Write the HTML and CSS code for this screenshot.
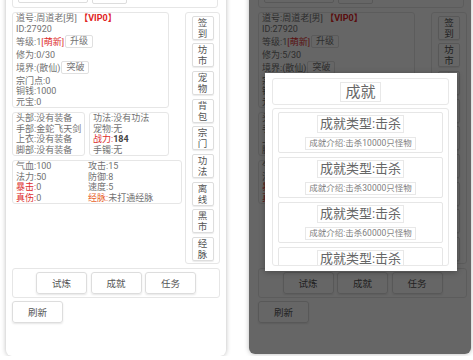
FILE: index.html
```html
<!DOCTYPE html>
<html lang="zh">
<head>
  <meta charset="UTF-8" />
  <title>修仙</title>
  <link rel="stylesheet" href="styles.css">
</head>
<body>

<div class="screens">

  <!-- 左：主界面 -->
  <div class="card">
    <div class="topbar">
      <div class="top-input"></div>
      <div class="top-btn"></div>
    </div>

    <div class="main">
      <div class="left-col">
        <div class="box info">
          <div>道号:周道老[男] <span class="vip">【VIP0】</span></div>
          <div>ID:27920</div>
          <div class="line-btn">等级:1<span class="red">[萌新]</span><span class="mini-btn">升级</span></div>
          <div>修为:0/30</div>
          <div class="line-btn">境界:(散仙)<span class="mini-btn">突破</span></div>
          <div>宗门点:0</div>
          <div>铜钱:1000</div>
          <div>元宝:0</div>
        </div>

        <div class="equip">
          <div class="box equip-a">
            <div>头部:没有装备</div>
            <div>手部:金蛇飞天剑</div>
            <div>上衣:没有装备</div>
            <div>脚部:没有装备</div>
          </div>
          <div class="box equip-b">
            <div>功法:没有功法</div>
            <div>宠物:无</div>
            <div><span class="red">战力:</span><b class="power">184</b></div>
            <div>手镯:无</div>
          </div>
        </div>

        <div class="box stats">
          <div>气血:100</div><div>攻击:15</div>
          <div>法力:50</div><div>防御:8</div>
          <div><span class="red">暴击:</span>0</div><div>速度:5</div>
          <div><span class="red">真伤:</span>0</div><div><span class="orange">经脉:</span>未打通经脉</div>
        </div>
      </div>

      <div class="side">
        <div class="side-btn">签<br>到</div>
        <div class="side-btn">坊<br>市</div>
        <div class="side-btn">宠<br>物</div>
        <div class="side-btn">背<br>包</div>
        <div class="side-btn">宗<br>门</div>
        <div class="side-btn">功<br>法</div>
        <div class="side-btn">离<br>线</div>
        <div class="side-btn">黑<br>市</div>
        <div class="side-btn">经<br>脉</div>
      </div>
    </div>

    <div class="actions">
      <div class="btn">试炼</div>
      <div class="btn">成就</div>
      <div class="btn">任务</div>
    </div>
    <div class="btn refresh">刷新</div>
  </div>

  <!-- 右：成就弹窗 -->
  <div class="card card-right">
    <div class="topbar">
      <div class="top-input"></div>
      <div class="top-btn"></div>
    </div>

    <div class="main">
      <div class="left-col">
        <div class="box info">
          <div>道号:周道老[男] <span class="vip">【VIP0】</span></div>
          <div>ID:27920</div>
          <div class="line-btn">等级:1<span class="red">[萌新]</span><span class="mini-btn">升级</span></div>
          <div>修为:5/30</div>
          <div class="line-btn">境界:(散仙)<span class="mini-btn">突破</span></div>
          <div>宗门点:0</div>
          <div>铜钱:1000</div>
          <div>元宝:0</div>
        </div>

        <div class="equip">
          <div class="box equip-a">
            <div>头部:没有装备</div>
            <div>手部:金蛇飞天剑</div>
            <div>上衣:没有装备</div>
            <div>脚部:没有装备</div>
          </div>
          <div class="box equip-b">
            <div>功法:没有功法</div>
            <div>宠物:无</div>
            <div><span class="red">战力:</span><b class="power">184</b></div>
            <div>手镯:无</div>
          </div>
        </div>

        <div class="box stats">
          <div>气血:100</div><div>攻击:15</div>
          <div>法力:50</div><div>防御:8</div>
          <div><span class="red">暴击:</span>0</div><div>速度:5</div>
          <div><span class="red">真伤:</span>0</div><div><span class="orange">经脉:</span>未打通经脉</div>
        </div>
      </div>

      <div class="side">
        <div class="side-btn">签<br>到</div>
        <div class="side-btn">坊<br>市</div>
        <div class="side-btn">宠<br>物</div>
        <div class="side-btn">背<br>包</div>
        <div class="side-btn">宗<br>门</div>
        <div class="side-btn">功<br>法</div>
        <div class="side-btn">离<br>线</div>
        <div class="side-btn">黑<br>市</div>
        <div class="side-btn">经<br>脉</div>
      </div>
    </div>

    <div class="actions">
      <div class="btn">试炼</div>
      <div class="btn">成就</div>
      <div class="btn">任务</div>
    </div>
    <div class="btn refresh">刷新</div>

    <div class="overlay"></div>

    <div class="modal">
      <div class="modal-head">
        <span class="modal-title">成就</span>
      </div>
      <div class="ach-list">
        <div class="ach">
          <div class="ach-type">成就类型:击杀</div>
          <div class="ach-desc">成就介绍:击杀10000只怪物</div>
        </div>
        <div class="ach">
          <div class="ach-type">成就类型:击杀</div>
          <div class="ach-desc">成就介绍:击杀30000只怪物</div>
        </div>
        <div class="ach">
          <div class="ach-type">成就类型:击杀</div>
          <div class="ach-desc">成就介绍:击杀60000只怪物</div>
        </div>
        <div class="ach">
          <div class="ach-type">成就类型:击杀</div>
          <div class="ach-desc">成就介绍:击杀100000只怪物</div>
        </div>
      </div>
    </div>
  </div>

</div>

</body>
</html>
```

FILE: styles.css
```css
body {
  margin: 0;
  padding: 0;
  overflow: hidden;
  background: #fff;
  font-family: Roboto, "Noto Sans CJK SC", sans-serif;
  font-size: 9px;
  color: #727272;
}

.screens {
  display: flex;
  align-items: flex-start;
  gap: 23px;
  padding-left: 6px;
}

.card {
  position: relative;
  width: 220px;
  margin-top: -27px;
  padding: 6px 6px 33px;
  box-sizing: border-box;
  background: #fff;
  border-radius: 0 0 6px 6px;
  box-shadow: 0 0 5px rgba(0, 0, 0, 0.28);
}

.card-right {
  width: 222px;
  padding: 6px 4px 31px 9px;
}

/* 顶部被截掉的一栏 */
.topbar {
  width: 206px;
  box-sizing: border-box;
  display: flex;
  gap: 4px;
  padding: 3px 5px;
  border: 1px solid #e6e6e6;
  border-radius: 3px;
}

.top-input {
  width: 70px;
  height: 20px;
  box-sizing: border-box;
  border: 1px solid #ddd;
  border-radius: 2px;
}

.top-btn {
  width: 35px;
  height: 21px;
  box-sizing: border-box;
  border: 1px solid #ddd;
  border-radius: 2px;
}

.main {
  display: flex;
  align-items: flex-start;
  gap: 3px;
  margin-top: 4px;
}

.left-col {
  width: 170px;
  flex-shrink: 0;
  display: flex;
  flex-direction: column;
  align-items: flex-start;
  gap: 4px;
}

.box {
  box-sizing: border-box;
  border: 1px solid #e6e6e6;
  border-radius: 3px;
  padding: 0 3px;
  line-height: 10.5px;
  white-space: nowrap;
}

.info {
  width: 157px;
}

.line-btn {
  display: flex;
  align-items: center;
  height: 15.5px;
}

.mini-btn {
  height: 13px;
  box-sizing: border-box;
  margin-left: 1px;
  padding: 0 4px;
  border: 1px solid #e0e0e0;
  border-radius: 2px;
  line-height: 11px;
  color: #727272;
}

.vip {
  color: #e02424;
  font-weight: bold;
}

.red {
  color: #dd2c2c;
}

.orange {
  color: #e8632b;
}

.power {
  color: #444;
}

.equip {
  display: flex;
  gap: 4px;
}

.equip-a {
  width: 73px;
}

.equip-b {
  width: 80px;
}

.stats {
  width: 170px;
  display: grid;
  grid-template-columns: 72px 1fr;
}

.side {
  flex: 1;
  box-sizing: border-box;
  display: flex;
  flex-direction: column;
  align-items: center;
  gap: 3.7px;
  padding: 2.5px 0 2px;
  border: 1px solid #e6e6e6;
  border-radius: 3px;
}

.side-btn {
  width: 22px;
  height: 24px;
  box-sizing: border-box;
  display: flex;
  align-items: center;
  justify-content: center;
  text-align: center;
  border: 1px solid #ddd;
  border-radius: 2px;
  font-size: 9.5px;
  line-height: 11px;
  color: #555;
  box-shadow: 0 1px 1px rgba(0, 0, 0, 0.08);
}

.actions {
  display: flex;
  justify-content: center;
  gap: 3.5px;
  margin-top: 4px;
  padding: 2.5px 0;
  border: 1px solid #e6e6e6;
  border-radius: 3px;
}

.btn {
  width: 51px;
  height: 22.5px;
  box-sizing: border-box;
  display: flex;
  align-items: center;
  justify-content: center;
  border: 1px solid #ddd;
  border-radius: 3px;
  font-size: 9.5px;
  color: #555;
  box-shadow: 0 1px 2px rgba(0, 0, 0, 0.1);
}

.refresh {
  margin-top: 3px;
}

/* 弹窗 */
.overlay {
  position: absolute;
  inset: 0;
  background: rgba(0, 0, 0, 0.6);
  border-radius: 0 0 6px 6px;
}

.modal {
  position: absolute;
  top: 100px;
  left: 16px;
  width: 192px;
  height: 198px;
  box-sizing: border-box;
  display: flex;
  flex-direction: column;
  gap: 3px;
  padding: 5px 8px 5px 7px;
  background: #fff;
  box-shadow: 0 1px 6px rgba(0, 0, 0, 0.3);
}

.modal-head {
  height: 27px;
  box-sizing: border-box;
  display: flex;
  align-items: center;
  justify-content: center;
  border: 1px solid #e8e8e8;
  border-radius: 3px;
}

.modal-title {
  height: 20px;
  box-sizing: border-box;
  padding: 0 4px;
  border: 1px solid #e8e8e8;
  font-size: 15px;
  line-height: 18px;
  color: #666;
}

.ach-list {
  flex: 1;
  overflow: hidden;
  display: flex;
  flex-direction: column;
  gap: 4.5px;
  padding: 3px 5px 0;
  border: 1px solid #e8e8e8;
  border-radius: 3px;
}

.ach {
  flex-shrink: 0;
  display: flex;
  flex-direction: column;
  align-items: center;
  gap: 4px;
  padding: 2px 0;
  border: 1px solid #e6e6e6;
  border-radius: 2px;
}

.ach-type {
  height: 18px;
  box-sizing: border-box;
  padding: 0 2px;
  border: 1px solid #e8e8e8;
  font-size: 13px;
  line-height: 16px;
  color: #666;
}

.ach-desc {
  height: 12.5px;
  box-sizing: border-box;
  padding: 0 3px;
  border: 1px solid #e8e8e8;
  font-size: 8.5px;
  line-height: 10.5px;
  color: #808080;
}
```
